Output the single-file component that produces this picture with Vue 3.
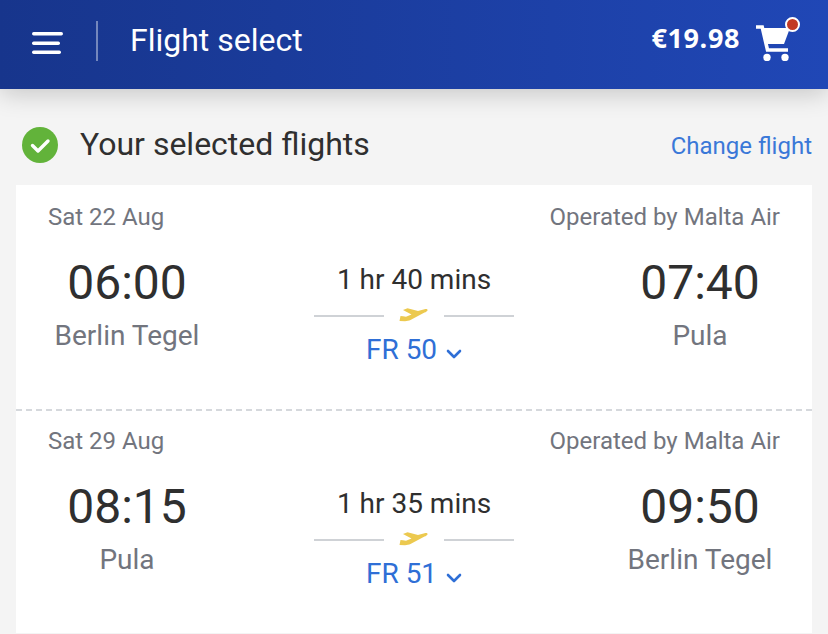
<script setup>
const segments = [
  { date: 'Sat 22 Aug', op: 'Operated by Malta Air', dep: '06:00', from: 'Berlin Tegel', dur: '1 hr 40 mins', code: 'FR 50', arr: '07:40', to: 'Pula' },
  { date: 'Sat 29 Aug', op: 'Operated by Malta Air', dep: '08:15', from: 'Pula', dur: '1 hr 35 mins', code: 'FR 51', arr: '09:50', to: 'Berlin Tegel' },
]
</script>

<template>
  <div class="page">
    <header class="bar">
      <svg class="menu" width="32" height="24" viewBox="0 0 32 24">
        <rect x="0" y="1" width="31" height="3.4" rx="1.700" fill="#fff" />
        <rect x="0" y="10.5" width="28" height="3.4" rx="1.700" fill="#fff" />
        <rect x="0" y="19.600" width="29" height="3.4" rx="1.700" fill="#fff" />
      </svg>
      <span class="divider"></span>
      <span class="title">Flight select</span>
      <span class="price">€19.98</span>
      <span class="cart">
        <svg width="38" height="44" viewBox="0 0 38 44">
          <path d="M1 10h6.200l5.300 23H33" fill="none" stroke="#fff" stroke-width="3.600" />
          <path d="M8 11h27l-6 16H12z" fill="#fff" />
          <circle cx="12" cy="40.500" r="3.700" fill="#fff" />
          <circle cx="30" cy="40.500" r="3.700" fill="#fff" />
        </svg>
        <span class="dot"></span>
      </span>
    </header>

    <section class="heading">
      <svg width="36" height="36" viewBox="0 0 36 36">
        <circle cx="18" cy="18" r="18" fill="#62b33a" />
        <path d="M10.500 18.500l5.500 5.500 10-10" fill="none" stroke="#fff" stroke-width="3.400" stroke-linecap="round" stroke-linejoin="round" />
      </svg>
      <h1>Your selected flights</h1>
      <a class="change">Change flight</a>
    </section>

    <section class="card">
      <article v-for="(s, i) in segments" :key="s.code" class="segment" :class="{ dashed: i === 0 }">
        <div class="meta">
          <span>{{ s.date }}</span>
          <span>{{ s.op }}</span>
        </div>
        <div class="route">
          <div class="place">
            <div class="time">{{ s.dep }}</div>
            <div class="city">{{ s.from }}</div>
          </div>
          <div class="mid">
            <div class="dur">{{ s.dur }}</div>
            <div class="line">
              <span class="rule"></span>
              <svg width="30" height="16" viewBox="0 0 30 16">
                <path d="M0.500 13L1.500 8l2.500.3 3 .4 5.500-2.200L4 2 8.500.3 19 3l6.500-1.800c2-.5 3.500 0 3 1.300-.3.8-1.500 1.500-3 2.100L11.500 12c-1.500.7-3.500 1.200-5.500 1.200z" fill="#ecc94f" />
              </svg>
              <span class="rule"></span>
            </div>
            <div class="code">
              {{ s.code }}
              <svg width="16" height="10" viewBox="0 0 16 10">
                <path d="M2 2l6 6 6-6" fill="none" stroke="#2f6fd6" stroke-width="2.600" stroke-linecap="round" stroke-linejoin="round" />
              </svg>
            </div>
          </div>
          <div class="place">
            <div class="time">{{ s.arr }}</div>
            <div class="city">{{ s.to }}</div>
          </div>
        </div>
      </article>
    </section>
  </div>
</template>

<style>
html, body { margin: 0; background: #f4f4f4; }
</style>

<style scoped>
.page {
  width: 828px;
  height: 634px;
  overflow: hidden;
  background: #f4f4f4;
  font-family: Roboto, sans-serif;
}
.bar {
  position: relative;
  height: 89px;
  display: flex;
  align-items: center;
  padding: 0 0 8px 32px;
  box-sizing: border-box;
  background: linear-gradient(90deg, #17358c 0%, #2047b6 100%);
  box-shadow: 0 4px 24px rgba(0, 0, 0, 0.2);
  color: #fff;
}
.menu { margin-top: 5px; }
.divider {
  width: 2px;
  height: 40px;
  margin-left: 32px;
  background: rgba(255, 255, 255, 0.4);
}
.title {
  margin-left: 32px;
  margin-bottom: 2px;
  font-size: 32px;
  line-height: 40px;
}
.price {
  margin-left: auto;
  margin-bottom: 6px;
  font-family: "Open Sans", sans-serif;
  font-weight: 700;
  font-size: 27px;
  letter-spacing: 0.6px;
}
.cart {
  position: relative;
  width: 38px;
  height: 44px;
  margin-left: 15px;
  margin-right: 35px;
  margin-bottom: 3px;
}
.cart svg { display: block; }
.dot {
  position: absolute;
  top: 0;
  right: -7px;
  width: 11px;
  height: 11px;
  border-radius: 50%;
  background: #c23a24;
  border: 2px solid #fff;
}
.heading {
  height: 96px;
  display: flex;
  align-items: center;
  padding: 16px 16px 0 22px;
  box-sizing: border-box;
}
.heading h1 {
  margin: 0 0 2px 22px;
  font-size: 32px;
  font-weight: 400;
  color: #2f2f2f;
}
.change {
  margin-left: auto;
  margin-top: 2px;
  font-size: 24px;
  color: #3a78d8;
}
.card {
  margin: 0 16px;
  padding-top: 2px;
  box-sizing: border-box;
  background: #fff;
  height: 448px;
}
.segment {
  height: 224px;
  box-sizing: border-box;
  padding-top: 16px;
}
.segment:last-child { height: 222px; }
.dashed { border-bottom: 2px dashed #d5d8dc; }
.meta {
  display: flex;
  justify-content: space-between;
  padding: 0 32px;
  font-size: 24px;
  line-height: 28px;
  color: #72757e;
}
.route {
  display: grid;
  grid-template-columns: 224px 1fr 224px;
  margin-top: 24px;
}
.place { text-align: center; }
.place:first-child { padding-right: 2px; }
.time {
  font-size: 48px;
  line-height: 56px;
  color: #2f2f2f;
}
.city {
  font-size: 28px;
  line-height: 32px;
  margin-top: 9px;
  color: #72757e;
}
.mid { text-align: center; padding-top: 8px; }
.dur {
  font-size: 28px;
  line-height: 34px;
  color: #2f2f2f;
}
.line {
  display: flex;
  align-items: center;
  justify-content: center;
  gap: 15px;
  height: 28px;
  margin-top: 5px;
}
.rule {
  width: 70px;
  height: 2px;
  background: #cfd2d6;
}
.code {
  font-size: 28px;
  line-height: 34px;
  color: #2f6fd6;
  margin-top: 3px;
}
.code svg { margin-left: 2px; vertical-align: 0; }
</style>
